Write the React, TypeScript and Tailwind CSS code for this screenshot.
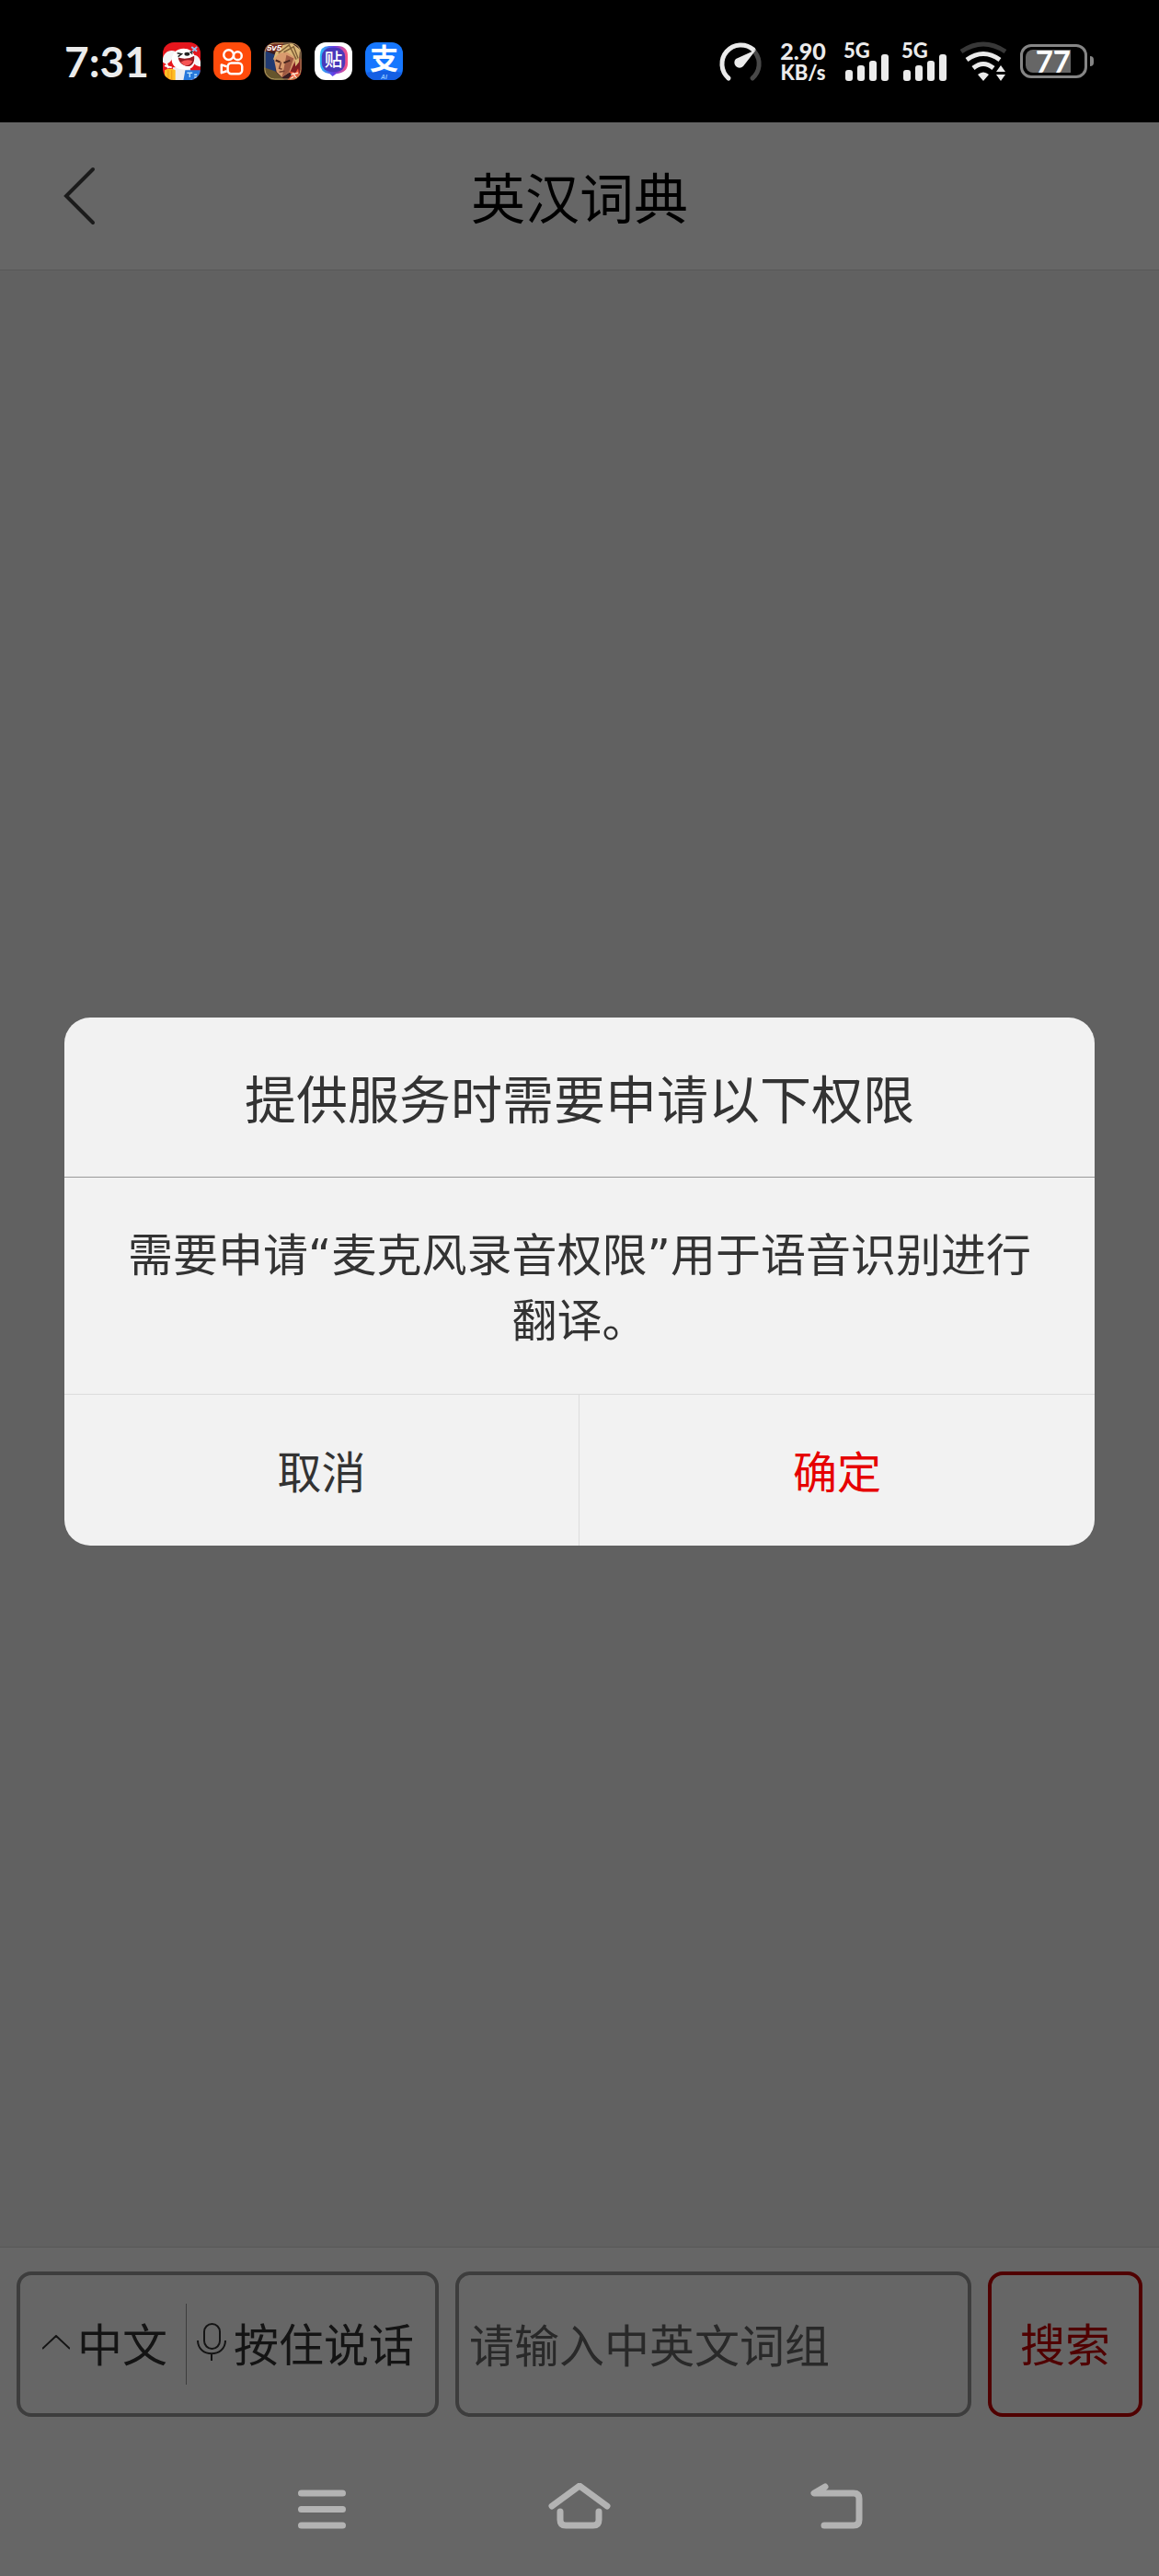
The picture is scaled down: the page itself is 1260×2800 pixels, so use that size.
import type { ReactNode } from 'react';

const phoneFont = "font-['Noto_Sans_CJK_SC',sans-serif]";

function AppIcon({ label, children }: { label: string; children: ReactNode }) {
  return (
    <svg viewBox="0 0 42 42" className="h-[41px] w-[41px] rounded-xl" role="img" aria-label={label}>
      {children}
    </svg>
  );
}

function DogIcon() {
  return (
    <AppIcon label="购物">
      <rect width="42" height="42" fill="#e6161d" />
      <path d="M12 42 L11 28 L30 27 L33 42Z" fill="#ededf0" />
      <path d="M14 10 C5 7 -1 14 0 22 C4 26 9 23 11 17Z" fill="#f4f4f6" />
      <path d="M34 14 C40 14 43 20 42 27 C38 27 34 24 33 20Z" fill="#f4f4f6" />
      <path d="M13 11 C20 4 34 6 36 17 C37 27 31 32 21 30 C10 29 7 19 13 11Z" fill="#fff" />
      <path d="M17 17 Q27 20 35 15 C36 25 30 28 25 26 C20 25 18 21 17 17Z" fill="#991a22" />
      <path d="M20 22 Q27 18 33 21 Q29 28 23 25Z" fill="#f65554" />
      <ellipse cx="27" cy="13" rx="3" ry="2" fill="#222" />
      <path d="M16 12 l5 1 -4 3 M34 10 l-3 1 2 2" fill="none" stroke="#222" strokeWidth="1.5" />
      <path d="M2 26 l8 2 M4 23 l2 6" stroke="#fff" strokeWidth="2" />
      <path d="M2 31 Q8 28 14 31 V42 H2Z" fill="#ffbd23" />
      <path d="M6 31 V42 M10 31 V42" stroke="#ef9517" />
      <path d="M25 31 h17 v11 H23Z" fill="#2778dc" />
      <path d="M27 34 h6 M30 34 v5 M35 36 h3 M35 39 h3" stroke="#b8e1ff" strokeWidth="1.5" />
      <path d="M32 5 l6 5 M38 5 l-5 5" stroke="#9abbe8" strokeWidth="2" />
    </AppIcon>
  );
}

function VideoIcon() {
  return (
    <AppIcon label="短视频">
      <rect width="42" height="42" fill="#ff4b0b" />
      <g fill="none" stroke="#fff" strokeWidth="2.5" strokeLinejoin="round">
        <circle cx="17" cy="14" r="5.5" />
        <circle cx="27" cy="15" r="4.5" />
        <rect x="16" y="23" width="16" height="12" rx="4" />
        <path d="M15 27 L9 25 V34 L15 32" />
      </g>
    </AppIcon>
  );
}

function GameIcon() {
  return (
    <AppIcon label="游戏">
      <rect width="42" height="42" fill="#3a1c20" />
      <path d="M0 9 L13 14 V36 L0 29Z" fill="#203a72" />
      <path d="M30 10 L42 19 V38 L28 34Z" fill="#801c20" />
      <path d="M0 28 L12 32 L23 42 H0Z" fill="#66552c" />
      <path d="M11 18 L17 8 L31 9 L35 20 L29 33 L20 39 L14 33Z" fill="#d99b6e" />
      <path d="M25 14 L33 18 L28 33 L20 39 L22 30Z" fill="#9f5942" />
      <path d="M10 20 L15 4 L31 1 L40 8 L39 22 L35 27 L34 17 L26 11 L17 12Z" fill="#dbb878" />
      <path d="M16 12 L28 3 L36 19 M22 11 L33 5 L38 18" fill="none" stroke="#806038" strokeWidth="1.5" />
      <path d="M13 20 l5 2 M22 23 l7 -3" stroke="#49261e" strokeWidth="2" />
      <path d="M19 22 l-2 7 3 1 M17 33 l6 -1" fill="none" stroke="#75402f" strokeWidth="1.5" />
      <path d="M0 0 H22 L18 10 H0Z" fill="#752c22" />
      <text x="3" y="9" className="fill-white font-['Liberation_Sans'] text-[10px] font-bold italic">5v5</text>
      <path d="M26 42 L31 36 L28 32 L35 34 L38 29 L39 35 H42 V42Z" fill="#ed5639" />
      <path d="M30 36 L38 34 M32 34 L37 41 M33 38 L29 41" stroke="#ffe2cc" strokeWidth="1.5" />
      <rect x="1" y="1" width="40" height="40" rx="11" fill="none" stroke="#b09a60" />
    </AppIcon>
  );
}

function PostIcon() {
  return (
    <AppIcon label="贴吧">
      <defs>
        <linearGradient id="post-edge">
          <stop stopColor="#25bff7" />
          <stop offset=".5" stopColor="#643ce6" />
          <stop offset="1" stopColor="#ff547e" />
        </linearGradient>
      </defs>
      <rect width="42" height="42" fill="#fff" />
      <path d="M16 4 H26 Q37 4 37 16 V23 Q37 34 24 35 L20 38 L17 35 Q6 34 6 23 V15 Q6 4 16 4Z" fill="url(#post-edge)" />
      <rect x="8" y="6" width="26" height="27" rx="10" fill="#4939ba" />
      <text x="21" y="27" textAnchor="middle" className="fill-white font-['Noto_Sans_CJK_SC',sans-serif] text-[20px] font-medium">贴</text>
    </AppIcon>
  );
}

function PayIcon() {
  return (
    <AppIcon label="支付">
      <rect width="42" height="42" fill="#1677ff" />
      <path d="M0 34 Q20 29 42 34 V42 H0Z" fill="#145fe4" />
      <text x="21" y="30" textAnchor="middle" className="fill-white font-['Noto_Sans_CJK_SC',sans-serif] text-[32px] font-bold">支</text>
      <text x="21" y="41" textAnchor="middle" className="fill-[#8cc5ff] font-['Liberation_Sans'] text-[7px] font-bold italic">AI</text>
    </AppIcon>
  );
}

function SpeedIcon() {
  return (
    <svg viewBox="0 0 48 44" className="h-[44px] w-[48px]" aria-hidden="true">
      <path d="M11 40 A20.5 20.5 0 0 1 38 9" fill="none" stroke="#ebebeb" strokeWidth="5" strokeLinecap="round" />
      <path d="M40 12 A20.5 20.5 0 0 1 37 40" fill="none" stroke="#484848" strokeWidth="5" strokeLinecap="round" />
      <path d="M41 9 L27 27 A5.5 5.5 0 1 1 19 19Z" fill="#ebebeb" />
    </svg>
  );
}

function MobileSignal() {
  return (
    <div className="relative h-[44px] w-[52px]">
      <span className="absolute top-0 left-0 font-['Lato',sans-serif] text-[22px] leading-[20px] font-black">5G</span>
      <svg viewBox="0 0 52 44" className="h-full w-full" fill="#ebebeb" aria-hidden="true">
        <rect x="2" y="31" width="8" height="12" rx="3" />
        <rect x="15" y="26" width="8" height="17" rx="3" />
        <rect x="28" y="21" width="8" height="22" rx="3" />
        <rect x="41" y="14" width="8" height="29" rx="3" />
      </svg>
    </div>
  );
}

function WifiIcon() {
  return (
    <svg viewBox="0 0 52 44" className="mr-[3px] h-[44px] w-[52px]" aria-hidden="true">
      <g fill="none" strokeWidth="5">
        <path d="M2 11 Q26 -5 50 11" stroke="#383838" />
        <path d="M8 20 Q26 7 44 20" stroke="#ebebeb" />
        <path d="M15 29 Q26 20 37 29" stroke="#ebebeb" />
      </g>
      <path d="M20 36 Q26 31 32 36 L26 43Z M40 33 L45 26 L50 33Z M40 36 H50 L45 43Z" fill="#ebebeb" />
    </svg>
  );
}

function Battery() {
  return (
    <div className="flex items-center gap-[3px]">
      <div className="flex h-[37px] w-[73px] rounded-xl border-[3px] border-[#858585] p-[3px]">
        <div className="flex w-[49px] items-center justify-end rounded-l-lg bg-[#666]">
          <span className="font-['Lato',sans-serif] text-[33px] leading-none font-bold text-white">77</span>
        </div>
      </div>
      <div className="h-[11px] w-1 rounded-r-full bg-[#858585]" />
    </div>
  );
}

function StatusBar() {
  return (
    <header className="flex h-[133px] shrink-0 items-center justify-between bg-black pr-[71px] pl-[70px] text-[#ebebeb]">
      <div className="flex items-center gap-[14px]">
        <span className="w-[93px] font-['Lato',sans-serif] text-[46px] leading-[48px] font-bold">7:31</span>
        <DogIcon />
        <VideoIcon />
        <GameIcon />
        <PostIcon />
        <PayIcon />
      </div>
      <div className="flex items-center gap-[11px]">
        <SpeedIcon />
        <div className="mx-[6px] w-[54px] text-center font-['Lato',sans-serif] leading-[24px] font-black">
          <div className="text-[25px]">2.90</div>
          <div className="text-[22px]">KB/s</div>
        </div>
        <MobileSignal />
        <MobileSignal />
        <WifiIcon />
        <Battery />
      </div>
    </header>
  );
}

function PermissionDialog() {
  return (
    <div className="absolute inset-0 flex items-center bg-black/60 px-[70px]">
      <section
        role="dialog"
        aria-modal="true"
        aria-labelledby="dialog-title"
        className="w-full overflow-hidden rounded-[28px] bg-[#f2f2f2] text-center text-[#333]"
      >
        <h2 id="dialog-title" className="border-b border-[#999] pt-[48px] pb-[49px] text-[56px] leading-[76px]">
          提供服务时需要申请以下权限
        </h2>
        <p className="px-[60px] pt-[50px] pb-[43px] font-['DejaVu_Sans','Noto_Sans_CJK_SC',sans-serif] text-[49px] leading-[71px]">
          需要申请“麦克风录音权限”用于语音识别进行翻译。
        </p>
        <div className="grid grid-cols-2 border-t border-[#dcdcdc] text-[48px] leading-[72px]">
          <button type="button" className="border-r border-[#dcdcdc] pt-[45px] pb-[47px]">取消</button>
          <button type="button" className="pt-[45px] pb-[47px] text-[#e60000]">确定</button>
        </div>
      </section>
    </div>
  );
}

function SystemNav() {
  return (
    <footer className="flex h-[147px] items-center justify-center gap-[208px] bg-[#666] text-[#b3b3b3]">
      <button type="button" aria-label="最近任务">
        <svg viewBox="0 0 72 56" className="h-14 w-[72px]" fill="none" stroke="currentColor" strokeWidth="7" strokeLinecap="round">
          <path d="M13.5 11 H58.5 M13.5 28.5 H58.5 M13.5 46 H58.5" />
        </svg>
      </button>
      <button type="button" aria-label="主页">
        <svg viewBox="0 0 72 56" className="h-14 w-[72px]" fill="none" stroke="currentColor" strokeWidth="7" strokeLinecap="round" strokeLinejoin="round">
          <path d="M6 25 L36 3 L66 25 M15 31 V40 Q15 46 21 46 H51 Q57 46 57 40 V31" />
        </svg>
      </button>
      <button type="button" aria-label="返回上一级">
        <svg viewBox="0 0 72 56" className="h-14 w-[72px]" fill="none" stroke="currentColor" strokeWidth="7" strokeLinecap="round" strokeLinejoin="round">
          <path d="M23 4 L11 11 H54 Q60 11 60 17 V40 Q60 46 54 46 H22" />
        </svg>
      </button>
    </footer>
  );
}

export default function App() {
  return (
    <div className={`flex min-h-screen flex-col bg-[#f0f0f0] ${phoneFont}`}>
      <StatusBar />
      <div className="relative flex grow flex-col">
        <nav className="grid h-[161px] grid-cols-[1fr_auto_1fr] items-center border-b border-[#dcdcdc] bg-white px-[66px]">
          <button type="button" aria-label="返回" className="justify-self-start">
            <svg viewBox="0 0 42 64" className="h-16 w-[42px]" fill="none" stroke="#444" strokeWidth="4" strokeLinecap="round">
              <path d="M35 3 L6 32 L35 61" />
            </svg>
          </button>
          <h1 className="text-[59px] leading-[80px] text-black">英汉词典</h1>
        </nav>
        <main className="grow bg-[#f2f2f2]" />
        <form className="flex gap-[18px] border-t border-[#dcdcdc] bg-white px-[18px] py-[26px] text-[49px]" onSubmit={e => e.preventDefault()}>
          <div className="flex h-[158px] w-[459px] shrink-0 items-center rounded-2xl border-4 border-[#999] text-[#333]">
            <button type="button" className="flex items-center gap-[8px] pb-1 pl-[24px]">
              <svg viewBox="0 0 30 16" className="h-4 w-[30px]" fill="none" stroke="currentColor" strokeWidth="2">
                <path d="M0 15 L15 1 L30 15" />
              </svg>
              <span>中文</span>
            </button>
            <div className="ml-[20px] h-[88px] w-px bg-[#999]" />
            <button type="button" className="flex items-center gap-[8px] pb-1 pl-[11px]">
              <svg viewBox="0 0 32 42" className="h-[42px] w-8" fill="none" stroke="currentColor" strokeWidth="2">
                <rect x="8" y="1" width="17" height="27" rx="8.5" />
                <path d="M1 19 C1 38 31 38 31 19 M16 34 V41" />
              </svg>
              <span>按住说话</span>
            </button>
          </div>
          <input
            type="text"
            aria-label="中英文词组"
            placeholder="请输入中英文词组"
            className="h-[158px] w-0 min-w-0 grow rounded-2xl border-4 border-[#999] px-[11px] pb-1 text-[#333] placeholder:text-[#666]"
          />
          <button type="submit" className="h-[158px] w-[168px] shrink-0 rounded-2xl border-4 border-[#c70000] pb-1 text-[#c70000]">搜索</button>
        </form>
        <PermissionDialog />
      </div>
      <SystemNav />
    </div>
  );
}
